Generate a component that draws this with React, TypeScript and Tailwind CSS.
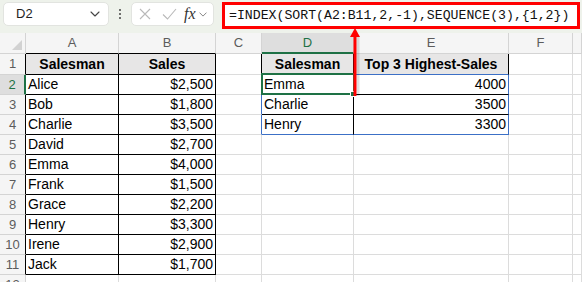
import type { ReactNode } from "react";

type Edge = "g" | "k" | "b" | "G" | "h";

const rightCls: Record<Edge, string> = {
  g: "border-r border-r-[#dcdcdc]",
  k: "border-r border-r-black",
  b: "border-r border-r-[#3c70c6]",
  G: "border-r-2 border-r-[#1e7145]",
  h: "border-r border-r-[#d4d4d4]",
};

const bottomCls: Record<Edge, string> = {
  g: "border-b border-b-[#dcdcdc]",
  k: "border-b border-b-black",
  b: "border-b border-b-[#3c70c6]",
  G: "border-b-2 border-b-[#1e7145]",
  h: "border-b border-b-[#d4d4d4]",
};

const COLS = ["A", "B", "C", "D", "E", "F", ""];

// cell values per row: A, B, C, D, E
const DATA: string[][] = [
  ["Salesman", "Sales", "", "Salesman", "Top 3 Highest-Sales"],
  ["Alice", "$2,500", "", "Emma", "4000"],
  ["Bob", "$1,800", "", "Charlie", "3500"],
  ["Charlie", "$3,500", "", "Henry", "3300"],
  ["David", "$2,700"],
  ["Emma", "$4,000"],
  ["Frank", "$1,500"],
  ["Grace", "$2,200"],
  ["Henry", "$3,300"],
  ["Irene", "$2,900"],
  ["Jack", "$1,700"],
  [],
];

function edges(r: number, c: number): [Edge, Edge] {
  if ((c === 0 || c === 1) && r <= 11) return ["k", "k"];
  if (c === 2) {
    if (r === 1) return ["k", "g"];
    if (r === 3 || r === 4) return ["b", "g"];
    return ["g", "g"];
  }
  if (c === 3) {
    if (r === 1) return ["k", "g"];
    if (r === 2 || r === 3) return ["k", "k"];
    if (r === 4) return ["k", "b"];
  }
  if (c === 4) {
    if (r === 1) return ["k", "b"];
    if (r === 2 || r === 3) return ["b", "k"];
    if (r === 4) return ["b", "b"];
  }
  return ["g", "g"];
}

function Cell({ r, c, children }: { r: number; c: number; children?: ReactNode }) {
  const [re, be] = edges(r, c);
  const isHead = r === 1 && (c === 0 || c === 1 || c === 3 || c === 4);
  const isNum = r > 1 && (c === 1 || c === 4);
  return (
    <div
      className={`flex items-center overflow-hidden whitespace-nowrap px-[2px] text-[14px] text-black ${rightCls[re]} ${bottomCls[be]} ${
        isHead ? "justify-center bg-[#e7e6e6] text-[13.5px] font-bold" : isNum ? "justify-end" : "justify-start"
      }`}
    >
      {children}
    </div>
  );
}

function Chevron({ className }: { className?: string }) {
  return (
    <svg className={className} viewBox="0 0 10 6" fill="none" stroke="currentColor" strokeWidth={1.1}>
      <path d="M1 1l4 4 4-4" strokeLinecap="round" strokeLinejoin="round" />
    </svg>
  );
}

function FormulaBar() {
  return (
    <div className="flex h-[33px] items-start bg-[#eef2eb] pt-[2px] pl-[3px]">
      <div className="flex h-[24px] w-[106px] items-center justify-between rounded-[5px] border border-[#e2e4e0] bg-white pl-[12px] pr-[8px] text-[13px] text-[#1f1f1f]">
        <span>D2</span>
        <Chevron className="h-[6px] w-[10px] text-[#444]" />
      </div>
      <div className="flex h-[24px] w-[22px] flex-col items-center justify-center gap-[2px]">
        <span className="h-[2px] w-[2px] rounded-full bg-[#444]" />
        <span className="h-[2px] w-[2px] rounded-full bg-[#444]" />
        <span className="h-[2px] w-[2px] rounded-full bg-[#444]" />
      </div>
      <div className="flex h-[24px] w-[83px] items-center rounded-[5px] border border-[#e2e4e0] bg-white pl-[7px]">
        <svg className="h-[12px] w-[12px] text-[#b9b9b9]" viewBox="0 0 12 12" fill="none" stroke="currentColor" strokeWidth={1.1}>
          <path d="M1 1l10 10M11 1L1 11" />
        </svg>
        <svg className="ml-[11px] h-[12px] w-[15px] text-[#b9b9b9]" viewBox="0 0 15 12" fill="none" stroke="currentColor" strokeWidth={1.1}>
          <path d="M1 6.5l4.5 4.5L14 1" />
        </svg>
        <span className="ml-[7px] font-['Liberation_Serif',serif] text-[16px] italic leading-none text-[#333]">fx</span>
        <Chevron className="ml-[3px] h-[5px] w-[8px] text-[#777]" />
      </div>
      <div className="ml-[8px] flex h-[27px] w-[358px] items-center border-[3px] border-[#ff0000] bg-white pl-[4px] font-['Liberation_Mono',monospace] text-[13.2px] text-[#111]">
        =INDEX(SORT(A2:B11,2,-1),SEQUENCE(3),{"{"}1,2{"}"})
      </div>
    </div>
  );
}

export default function App() {
  return (
    <div className="relative h-[282px] w-[582px] overflow-hidden bg-white font-['Liberation_Sans',Arial,sans-serif]">
      <FormulaBar />
      <div className="grid h-[249px] grid-cols-[26px_93px_97px_46px_92px_155px_64px_1fr] grid-rows-[21px_21px_repeat(11,20px)] overflow-hidden">
        {/* column headers */}
        <div className={`relative bg-[#f5f5f5] ${rightCls.h} ${bottomCls.h}`}>
          <svg className="absolute right-[3px] bottom-[3px] h-[10px] w-[10px]" viewBox="0 0 10 10">
            <path d="M10 0V10H0Z" fill="#d2d2d2" />
          </svg>
        </div>
        {COLS.map((l, i) => {
          const sel = l === "D";
          const b: Edge = sel ? "G" : i === 0 || i === 1 ? "k" : "h";
          return (
            <div
              key={`h${i}`}
              className={`flex items-center justify-center text-[13px] ${rightCls.h} ${bottomCls[b]} ${
                sel ? "bg-[#dedede] text-[#1e7145]" : "bg-[#f5f5f5] text-[#5c5c5c]"
              }`}
            >
              {l}
            </div>
          );
        })}
        {/* rows */}
        {DATA.map((row, ri) => {
          const r = ri + 1;
          const rh: Edge = r === 2 ? "G" : r <= 11 ? "k" : "h";
          return [
            <div
              key={`r${r}`}
              className={`flex items-center justify-center text-[13px] ${rightCls[rh]} ${bottomCls.h} ${
                r === 2 ? "bg-[#dedede] text-[#1e7145]" : "bg-[#f5f5f5] text-[#5c5c5c]"
              }`}
            >
              {r}
            </div>,
            ...COLS.map((_, c) => (
              <Cell key={`c${r}-${c}`} r={r} c={c}>
                {row[c] ?? ""}
              </Cell>
            )),
          ];
        })}
      </div>

      {/* active cell D2 */}
      <div className="pointer-events-none absolute left-[261px] top-[73px] h-[22px] w-[94px] border-2 border-[#1e7145]" />
      <div className="pointer-events-none absolute left-[350px] top-[91px] h-[6px] w-[6px] border border-white bg-[#1e7145]" />

      {/* red annotation arrow */}
      <svg className="pointer-events-none absolute left-[347px] top-[27px] h-[70px] w-[16px]" viewBox="0 0 16 70">
        <rect x="9.5" y="9" width="3" height="60" fill="#000" opacity="0.12" />
        <rect x="6.5" y="8" width="3" height="61" fill="#ff0000" />
        <path d="M8 1L13 10H3Z" fill="#ff0000" />
      </svg>
    </div>
  );
}
